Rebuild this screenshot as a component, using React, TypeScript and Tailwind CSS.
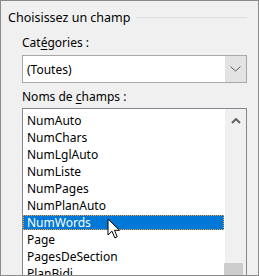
import React from "react";

const items = [
  "NumAuto",
  "NumChars",
  "NumLglAuto",
  "NumListe",
  "NumPages",
  "NumPlanAuto",
  "NumWords",
  "Page",
  "PagesDeSection",
  "PlanBidi",
];

export default function App() {
  return (
    <div
      className="relative w-[259px] h-[276px] overflow-hidden bg-[#f0f0f0] border border-[#8a8a8a] text-black text-[12px] leading-[17px]"
      style={{ fontFamily: '"Noto Sans", "Open Sans", sans-serif' }}
    >
      <div className="flex items-center pl-[7px] pr-[11px] pt-[8px]">
        <span className="whitespace-nowrap text-[12.5px]">Choisissez un champ</span>
        <div className="flex-1 h-px bg-[#dcdcdc] ml-[6px] mt-[-1px]" />
      </div>

      <div className="ml-[21px] w-[225px]">
        <div className="mt-[8px] h-[17px]">
          Cat<u className="underline-offset-2">é</u>gories :
        </div>
        <div className="mt-[4px] h-[28px] flex border border-[#a8a8a8] bg-white">
          <div className="flex-1 flex items-center pl-[4px]">(Toutes)</div>
          <div className="w-[21px] bg-[#e3e3e3] flex items-center justify-center">
            <svg width="11" height="6" viewBox="0 0 11 6">
              <path d="M0.5 0.5 L5.5 5 L10.5 0.5" fill="none" stroke="#5a5a5a" strokeWidth="1" />
            </svg>
          </div>
        </div>

        <div className="mt-[5px] h-[17px]">
          Noms de <u className="underline-offset-2">c</u>hamps :
        </div>
        <div className="mt-[3px] h-[200px] flex border border-[#828790] bg-white">
          <div className="flex-1 pt-[3px]">
            {items.map((it) =>
              it === "NumWords" ? (
                <div key={it} className="h-[17px] flex items-center pr-[1px]">
                  <div className="w-full h-[15px] flex items-center pl-[3px] bg-[#0078d7] text-white border border-dotted border-[#f5a033]">
                    {it}
                  </div>
                </div>
              ) : (
                <div key={it} className="h-[17px] flex items-center pl-[4px]">
                  {it}
                </div>
              )
            )}
          </div>
          <div className="w-[21px] bg-[#f0f0f0] flex flex-col items-center">
            <svg className="mt-[9px]" width="10" height="6" viewBox="0 0 10 6">
              <path d="M1 5 L5 1 L9 5" fill="none" stroke="#606060" strokeWidth="2" />
            </svg>
          </div>
        </div>
      </div>

      <div className="absolute left-[223px] top-[262px] w-[19px] h-[20px] bg-[#cdcdcd]" />

      <svg
        className="absolute left-[106px] top-[217px]"
        width="14"
        height="22"
        viewBox="0 0 14 22"
      >
        <path
          d="M1 1 L1 17 L5 13.2 L7.8 19.8 L10.2 18.8 L7.5 12.3 L12.5 12.3 Z"
          fill="white"
          stroke="black"
          strokeWidth="1"
          strokeLinejoin="miter"
        />
      </svg>
    </div>
  );
}
